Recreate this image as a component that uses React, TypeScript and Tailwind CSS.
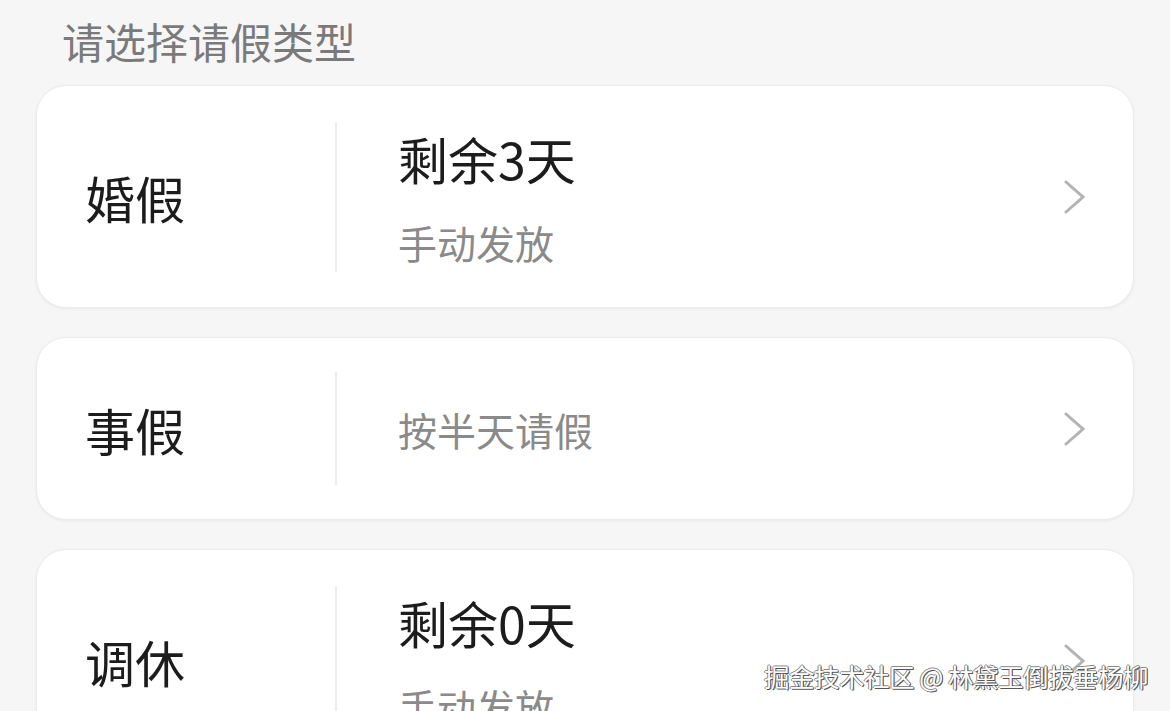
import React from "react";

const font = { fontFamily: '"Noto Sans CJK SC", "Noto Sans", sans-serif' };

function Chevron() {
  return (
    <svg width="24" height="34" viewBox="0 0 24 34" fill="none" className="shrink-0">
      <path d="M3 2 L20 17 L3 32" stroke="#b3b3b3" strokeWidth="3" strokeLinecap="round" strokeLinejoin="miter" />
    </svg>
  );
}

function Card({ label, title, sub, tall }: { label: string; title?: string; sub: string; tall: boolean }) {
  return (
    <div
      className={`flex items-center bg-white rounded-[30px] border border-[#ececec] shadow-[0_1px_3px_rgba(0,0,0,0.06)] pl-[48px] pr-[46px] ${
        tall ? "h-[223px]" : "h-[183px]"
      }`}
    >
      <div className="w-[250px] text-[50px] leading-[60px] text-[#1c1c1c] shrink-0">{label}</div>
      <div className={`w-[2px] bg-[#ededed] shrink-0 ${tall ? "h-[150px]" : "h-[113px]"}`} />
      <div className="flex-1 pl-[61px] flex flex-col">
        {title && <div className="text-[50px] leading-[60px] text-[#1c1c1c]">{title}</div>}
        <div className={`text-[39px] leading-[48px] text-[#8a8a8a] ${title ? "mt-[30px]" : ""}`}>{sub}</div>
      </div>
      <Chevron />
    </div>
  );
}

export default function App() {
  return (
    <div className="relative w-[1170px] h-[711px] overflow-hidden bg-[#f6f6f6]" style={font}>
      <div className="px-[36px] pt-[12px] flex flex-col">
        <div className="pl-[26px] text-[42px] leading-[58px] text-[#7a7a7a]">请选择请假类型</div>
        <div className="mt-[15px] flex flex-col gap-[29px]">
          <Card label="婚假" title="剩余3天" sub="手动发放" tall />
          <Card label="事假" sub="按半天请假" tall={false} />
          <Card label="调休" title="剩余0天" sub="手动发放" tall />
        </div>
      </div>
      <div
        className="absolute left-[764px] top-[658px] text-[25.5px] leading-[36px] text-white tracking-[-0.5px]"
        style={{ textShadow: "1px 1px 0 #555, -1px 0 0 #888, 0 -1px 0 #888, 1px 0 0 #666" }}
      >
        掘金技术社区 @ 林黛玉倒拔垂杨柳
      </div>
    </div>
  );
}
